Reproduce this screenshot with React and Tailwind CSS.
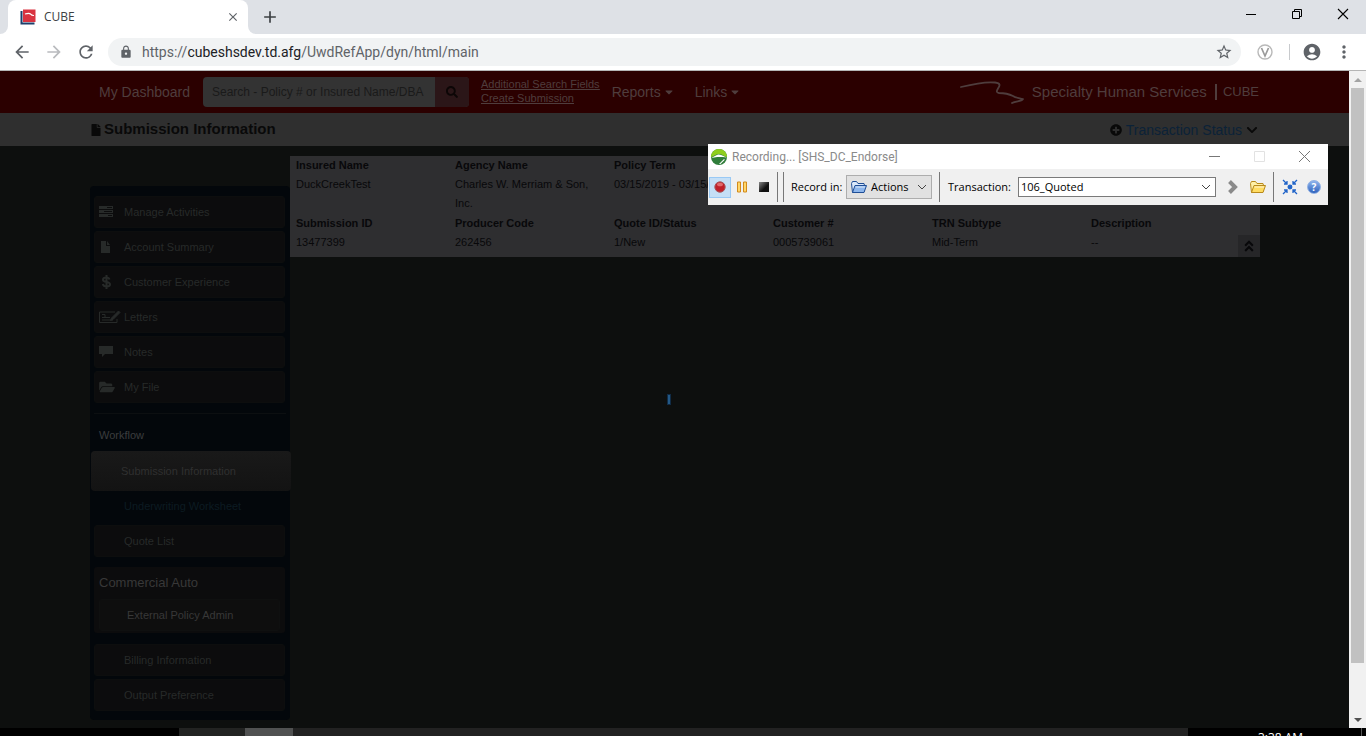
import React from 'react';
import { FaFile, FaFolderOpen, FaSearch, FaPlusCircle, FaChevronDown, FaAngleDoubleUp, FaCaretDown } from 'react-icons/fa';
import { MdArrowBack, MdArrowForward, MdRefresh, MdLock, MdStarBorder, MdAccountCircle, MdMoreVert, MdClose, MdAdd } from 'react-icons/md';

function BrowserTabs() {
  return (
    <div className="flex h-[34px] shrink-0 bg-[#dee1e6]">
      <div className="flex w-2 items-end bg-white"><span className="h-full w-2 rounded-br-lg bg-[#dee1e6]" /></div>
      <div className="flex w-60 items-center rounded-t-lg bg-white pl-3 pr-2">
        <svg className="h-4 w-4" viewBox="0 0 16 16" aria-hidden="true">
          <path d="M1.500 2v12.500h13" fill="none" stroke="#1d3f6b" strokeWidth="2" />
          <rect x="3" y="0.500" width="12.500" height="12.500" fill="#d93340" />
          <path d="M5 5c2-.6 4.500-1 5.500 0 .6.800 1 1.600 3.500 1.500" fill="none" stroke="#fff" strokeWidth="1.200" />
        </svg>
        <span className="ml-2 flex-1 text-xs text-[#3c4043]">CUBE</span>
        <button aria-label="Close tab" className="text-[#5f6368]"><MdClose className="h-[14px] w-[14px]" /></button>
      </div>
      <div className="w-2 bg-white"><span className="block h-full rounded-bl-lg bg-[#dee1e6]" /></div>
      <button aria-label="New tab" className="ml-1 text-[#3c4043]"><MdAdd className="h-5 w-5" /></button>
      <div className="ml-auto flex items-center gap-[34px] pb-[6px] pr-[17px] text-black">
        <button aria-label="Minimize"><svg className="h-3 w-3" viewBox="0 0 12 12"><path d="M1 6.500h10" stroke="currentColor" /></svg></button>
        <button aria-label="Restore"><svg className="h-3 w-3" viewBox="0 0 12 12" fill="none" stroke="currentColor"><path d="M1.500 3.500h7v7h-7zM3.500 3.500v-2h7v7h-2" /></svg></button>
        <button aria-label="Close"><svg className="h-3 w-3" viewBox="0 0 12 12" stroke="currentColor" strokeWidth="1.100"><path d="M1 1l10 10M11 1L1 11" /></svg></button>
      </div>
    </div>
  );
}

function AddressBar() {
  return (
    <div className="flex h-[37px] shrink-0 items-center border-b border-[#b5b5b5] bg-white pl-3 pr-3 text-[#5f6368]">
      <button aria-label="Back"><MdArrowBack className="h-5 w-5" /></button>
      <button aria-label="Forward" className="ml-3 text-[#b9bbbe]"><MdArrowForward className="h-5 w-5" /></button>
      <button aria-label="Reload" className="ml-3"><MdRefresh className="h-5 w-5" /></button>
      <div className="ml-3 flex h-7 flex-1 items-center rounded-full bg-[#f1f3f4] pl-[11px] pr-2">
        <MdLock className="h-[14px] w-[14px]" />
        <div className="ml-[9px] flex-1 font-['Roboto',sans-serif] text-sm" role="textbox" aria-label="Address" tabIndex={0}>
          https://<span className="text-[#202124]">cubeshsdev.td.afg</span>/UwdRefApp/dyn/html/main
        </div>
        <button aria-label="Bookmark"><MdStarBorder className="h-[18px] w-[18px]" /></button>
      </div>
      <button aria-label="Extension" className="ml-4 text-[#9a9a9a]">
        <svg className="h-4 w-4" viewBox="0 0 16 16" fill="none" stroke="currentColor"><circle cx="8" cy="8" r="7" strokeWidth="1.400" opacity=".7" /><path d="M4.500 4L8 12l3.500-8" strokeWidth="1.700" /></svg>
      </button>
      <span className="ml-4 h-4 w-px bg-[#c8cacd]" />
      <button aria-label="Profile" className="ml-3"><MdAccountCircle className="h-5 w-5" /></button>
      <button aria-label="Menu" className="ml-3"><MdMoreVert className="h-5 w-5" /></button>
    </div>
  );
}

function AppHeader() {
  return (
    <header className="h-[42px] bg-[#2b0000] px-[90px] text-sm text-[#4f3d3d]">
      <div className="flex h-full items-center">
        <a href="#dashboard" className="ml-[9px] w-[104px] whitespace-nowrap">My Dashboard</a>
        <form className="flex h-[30px] w-[266px] overflow-hidden rounded-[4px] bg-[#333333]">
          <input aria-label="Search" placeholder="Search - Policy # or Insured Name/DBA" className="h-full min-w-0 flex-1 pl-[9px] text-xs placeholder:text-[#1a1a1a]" />
          <button type="button" aria-label="Run search" className="flex w-[34px] items-center justify-center bg-[#2b1618] text-[#0c0606]"><FaSearch className="h-3 w-3" /></button>
        </form>
        <div className="ml-3 flex flex-col pb-[2px] text-[11px] leading-[14px] underline">
          <a href="#fields">Additional Search Fields</a>
          <a href="#create">Create Submission</a>
        </div>
        <button className="ml-3 flex items-center gap-[2px]">Reports <FaCaretDown className="h-3 w-3" /></button>
        <button className="ml-5 flex items-center gap-[2px]">Links <FaCaretDown className="h-3 w-3" /></button>
        <div className="ml-auto flex items-center">
          <svg className="h-6 w-16" viewBox="0 0 64 24" fill="none" stroke="currentColor" strokeWidth="1.800" strokeLinecap="round" strokeLinejoin="round" aria-hidden="true">
            <path d="M1 7C13 4 26 1.500 35 2.500c6 .8 5 3 3 6-1.500 2.500-2 4 1 4.500 6 0 10 1 14 3 3 2 6 2 10 3-2 3-7 1.500-11 4" />
          </svg>
          <span className="ml-2 text-[15px]">Specialty Human Services</span>
          <span className="ml-[8px] mr-[6px] h-4 w-[2px] bg-[#4f3d3d]" />
          <span className="text-[13px]">CUBE</span>
        </div>
      </div>
    </header>
  );
}

function TitleBar() {
  return (
    <div className="flex h-[33px] items-center justify-between bg-[#2f2f2f] px-[90px]">
      <h1 className="flex items-center gap-[3px] pl-px text-[15px] font-bold text-[#090909]"><FaFile className="h-3 w-[10px]" />Submission Information</h1>
      <button className="flex items-center gap-1 pr-px text-sm text-[#0b2238]"><FaPlusCircle className="h-3 w-3 text-[#090909]" />Transaction Status<FaChevronDown className="h-3 w-3 text-[#090909]" /></button>
    </div>
  );
}

function TasksIcon() {
  return (
    <svg viewBox="0 0 14 12" className="h-3 w-[14px]" fill="currentColor" aria-hidden="true">
      <path d="M0 0h14v3H0zM0 4h14v3H0zM0 8h14v3H0z" /><path d="M8 1h5v1H8zM5 5h8v1H5zM9 9h4v1H9z" fill="#0c0c0d" />
    </svg>
  );
}

function PageIcon() {
  return (
    <svg viewBox="0 0 14 12" className="h-3 w-[14px]" fill="currentColor" aria-hidden="true"><path d="M2 0h5v5h4v7H2zM8 0l3 4H8z" /></svg>
  );
}

function DollarIcon() {
  return (
    <svg viewBox="0 0 14 14" className="h-[14px] w-[14px]" fill="none" stroke="currentColor" strokeWidth="2" aria-hidden="true">
      <path d="M10.500 4.500C10 3 8.800 2.500 7.500 2.500 5.500 2.500 4 3.300 4 4.700 4 8 11 6 11 9.300c0 1.400-1.500 2.200-3.500 2.200S4.300 10.700 3.800 9M7.500 0v14" />
    </svg>
  );
}

function LetterIcon() {
  return (
    <svg viewBox="0 0 22 14" className="h-[14px] w-[22px] shrink-0" fill="none" stroke="currentColor" aria-hidden="true">
      <path d="M16 2H.5v10.500H18V9M3 4.500h3v3M3 7.500h8M3 10h11" /><path d="M11.500 10.500l1-2.500 7-7 1.500 1.500-7 7z" fill="currentColor" />
    </svg>
  );
}

function NoteIcon() {
  return (
    <svg viewBox="0 0 14 12" className="h-3 w-[14px]" fill="currentColor" aria-hidden="true"><path d="M0 0h14v8H6l-3 3V8H0z" /></svg>
  );
}

function FolderOpenIcon() {
  return <FaFolderOpen className="h-[14px] w-4" />;
}

const mainLinks = [
  { label: 'Manage Activities', Icon: TasksIcon },
  { label: 'Account Summary', Icon: PageIcon },
  { label: 'Customer Experience', Icon: DollarIcon },
  { label: 'Letters', Icon: LetterIcon },
  { label: 'Notes', Icon: NoteIcon },
  { label: 'My File', Icon: FolderOpenIcon },
];

function SideLink({ label, Icon }) {
  return (
    <a href="#page" className="flex h-8 items-center rounded-[3px] border border-[#0d0e0e] bg-[#0c0c0d] pl-1 text-[#272a29]">
      <span className="flex w-[25px] shrink-0">{Icon && <Icon />}</span>
      <span>{label}</span>
    </a>
  );
}

function Sidebar() {
  return (
    <nav className="mt-[30px] w-[200px] shrink-0 self-start rounded-[4px] bg-[#03070b] pb-[9px] pt-[10px] text-[11px]">
      <div className="flex flex-col gap-[3px] pl-1 pr-[5px]">
        {mainLinks.map((l) => <SideLink key={l.label} {...l} />)}
      </div>
      <div className="mx-1 mt-[10px] border-t border-[#0c0f11]" />
      <h2 className="pl-[9px] pt-[11px] leading-5 text-[#3b3d3e]">Workflow</h2>
      <a href="#submission" className="ml-px mt-[6px] flex h-10 w-[200px] items-center rounded-[4px] bg-gradient-to-b from-[#191919] to-[#131313] pl-[30px] text-[#303030]">Submission Information</a>
      <a href="#worksheet" className="flex h-[31px] items-center pl-[34px] text-[#0c1b22]">Underwriting Worksheet</a>
      <div className="mt-[3px] flex flex-col pl-1 pr-[5px]">
        <SideLink label="Quote List" />
        <section className="mt-[10px] rounded-[3px] bg-[#0c0c0d] px-[5px] pb-[2px] pt-[6px] text-[#383838]">
          <h2 className="text-[13px] leading-5">Commercial Auto</h2>
          <a href="#external" className="mt-[6px] flex h-8 items-center rounded-[3px] border border-[#0f1010] bg-[#0e0e0e] pl-[27px]">External Policy Admin</a>
        </section>
        <div className="mt-[11px] flex flex-col gap-[3px]">
          <SideLink label="Billing Information" />
          <SideLink label="Output Preference" />
        </div>
      </div>
    </nav>
  );
}

const fields = [
  ['Insured Name', 'DuckCreekTest'],
  ['Agency Name', 'Charles W. Merriam & Son, Inc.'],
  ['Policy Term', '03/15/2019 - 03/15/2020'],
  ['Submission ID', '13477399'],
  ['Producer Code', '262456'],
  ['Quote ID/Status', '1/New'],
  ['Customer #', '0005739061'],
  ['TRN Subtype', 'Mid-Term'],
  ['Description', '--'],
];

function PolicySummary() {
  const cell = ([label, value]) => (
    <div key={label} className="pr-6"><dt className="font-bold">{label}</dt><dd>{value}</dd></div>
  );
  return (
    <section className="flex flex-1 self-start bg-[#2e2e30] pl-[6px] text-[11px] leading-[19px] text-[#08080a]">
      <dl className="flex-1 pb-[5px]">
        <div className="grid grid-cols-6">{fields.slice(0, 3).map(cell)}</div>
        <div className="mt-px grid grid-cols-6">{fields.slice(3).map(cell)}</div>
      </dl>
      <div className="-ml-3 flex w-[22px] items-end">
        <button aria-label="Collapse" className="flex h-[22px] w-[22px] items-center justify-center bg-[#262628]"><FaAngleDoubleUp className="h-[14px] w-[14px]" /></button>
      </div>
    </section>
  );
}

function Scrollbar() {
  return (
    <div className="flex w-[17px] shrink-0 flex-col items-center bg-[#f1f1f1]" aria-hidden="true">
      <span className="flex h-[17px] items-center"><svg className="h-1 w-2" viewBox="0 0 8 4"><path d="M0 4l4-4 4 4z" fill="#a3a3a3" /></svg></span>
      <span className="h-[575px] w-[13px] shrink bg-[#c1c1c1]" />
      <span className="mt-auto flex h-[17px] items-center"><svg className="h-1 w-2" viewBox="0 0 8 4"><path d="M0 0l4 4 4-4z" fill="#505050" /></svg></span>
    </div>
  );
}

function Folder({ blue }) {
  const edge = blue ? '#1f4e96' : '#b98a1c';
  return (
    <svg className="h-[14px] w-4 shrink-0" viewBox="0 0 16 14" aria-hidden="true">
      <path d="M1.500 12.500l-1-9 1-2h4l1.500 2h6l.5 2v6z" fill={blue ? '#dbe9fb' : '#fff0a8'} stroke={edge} />
      <path d="M1.500 12.500l2.500-7h11.500l-2.500 7z" fill={blue ? '#8db6ec' : '#ffdc62'} stroke={edge} strokeLinejoin="round" />
      <path d="M4.500 7h9.500" stroke="#fff" opacity=".7" />
    </svg>
  );
}

function Chevron() {
  return <svg className="pointer-events-none absolute right-1 top-1/2 h-[6px] w-[10px] -translate-y-1/2" viewBox="0 0 10 6" fill="none" stroke="#444" aria-hidden="true"><path d="M1 1l4 4 4-4" /></svg>;
}

function RecorderWindow() {
  return (
    <section aria-label="Recorder" className="absolute left-[708px] top-[144px] w-[620px] bg-[#f0f0f0] text-[11px] text-black">
      <div className="flex h-[25px] items-center bg-white pl-[3px] pr-[18px] text-[#8a8a8a]">
        <svg className="h-4 w-4" viewBox="0 0 16 16" aria-hidden="true">
          <circle cx="8" cy="8" r="8" fill="#2f7d3a" />
          <path d="M0 8a8 8 0 0 1 16 0c-3 0-4-3-8-3S3 8 0 8z" fill="#8fce1e" />
          <path d="M0 8.500C4 8 5 5.500 8 5.500S13 8 16 8.500C13 8 11 8 8 8S3 9 0 8.500z" fill="#fff" />
          <path d="M8 15l5-5 .8.800-4.300 4.200z" fill="#fff" />
        </svg>
        <h2 className="ml-[5px] font-['Roboto',sans-serif] text-xs">Recording... [SHS_DC_Endorse]</h2>
        <div className="ml-auto flex items-center gap-[34px]">
          <button aria-label="Minimize recorder"><svg className="h-[11px] w-[11px]" viewBox="0 0 11 11" stroke="#777"><path d="M0 5.500h11" /></svg></button>
          <button aria-label="Maximize recorder"><svg className="h-[11px] w-[11px]" viewBox="0 0 11 11" stroke="#e2e2e2" fill="none"><path d="M.5.5h10v10H.5z" /></svg></button>
          <button aria-label="Close recorder"><svg className="h-[11px] w-[11px]" viewBox="0 0 11 11" stroke="#777"><path d="M0 0l11 11M11 0L0 11" /></svg></button>
        </div>
      </div>
      <div className="flex h-9 items-center pl-px pr-[7px]">
        <button aria-label="Record" className="flex h-[21px] w-[22px] items-center justify-center border border-[#99c9f5] bg-[#c5dff6]">
          <svg className="h-3 w-3" viewBox="0 0 12 12"><circle cx="6" cy="6" r="5.200" fill="#c0202a" stroke="#a65a5f" /><ellipse cx="6" cy="3.500" rx="3" ry="1.800" fill="#f08a8a" opacity=".7" /></svg>
        </button>
        <button aria-label="Pause" className="ml-[6px]"><svg className="h-3 w-[10px]" viewBox="0 0 10 12" fill="#ffd76a" stroke="#d28a1c"><path d="M.5 1h3v10h-3zM6.500 1h3v10h-3z" /></svg></button>
        <button aria-label="Stop" className="ml-3"><svg className="h-[10px] w-[10px]" viewBox="0 0 10 10"><defs><linearGradient id="stopShade" x1="0" y1="0" x2="1" y2="1"><stop offset="0" stopColor="#888" /><stop offset=".6" stopColor="#111" /></linearGradient></defs><path d="M0 0h10v10H0z" fill="url(#stopShade)" /></svg></button>
        <span className="ml-2 h-[30px] w-px bg-[#777]" /><span className="ml-[5px] h-[30px] w-px bg-[#777]" />
        <label htmlFor="target" className="ml-[7px] w-[55px] whitespace-nowrap">Record in:</label>
        <div className="relative flex h-6 w-[86px] items-center border border-[#adadad] bg-[#e1e1e1] pl-1">
          <Folder blue />
          <select id="target" className="h-full min-w-0 flex-1 appearance-none pl-1"><option>Actions</option></select>
          <Chevron />
        </div>
        <span className="ml-[7px] h-[30px] w-px bg-[#777]" />
        <label htmlFor="transaction" className="ml-2 w-[70px] whitespace-nowrap">Transaction:</label>
        <div className="relative h-5 flex-1 border border-[#7a7a7a] bg-white">
          <select id="transaction" className="h-full w-full appearance-none pl-[2px]"><option>106_Quoted</option></select>
          <Chevron />
        </div>
        <button aria-label="Next" className="ml-3"><svg className="h-[14px] w-[10px]" viewBox="0 0 10 14" fill="none" stroke="#8a8a8a" strokeWidth="4"><path d="M1.500 1.500L7 7l-5.500 5.500" /></svg></button>
        <button aria-label="Open folder" className="ml-3"><Folder /></button>
        <span className="ml-[7px] h-[30px] w-px bg-[#777]" />
        <button aria-label="Compact view" className="ml-2">
          <svg className="h-4 w-4" viewBox="0 0 16 16" fill="none" stroke="#1f63c8" strokeWidth="1.300"><circle cx="8" cy="8" r="1.800" fill="#1f63c8" /><path d="M1 1l4 4M15 1l-4 4M1 15l4-4M15 15l-4-4M5 2v3H2M11 2v3h3M5 14v-3H2M11 14v-3h3" /></svg>
        </button>
        <button aria-label="Help" className="ml-[9px] flex h-[14px] w-[14px] items-center justify-center rounded-full border border-[#8fb0e4] bg-gradient-to-b from-[#8fb4ec] to-[#2e62bd] text-[10px] font-bold leading-3 text-white">?</button>
      </div>
    </section>
  );
}

function Taskbar() {
  return (
    <footer className="flex h-2 shrink-0 overflow-hidden bg-black text-xs text-white">
      <span className="w-[179px]" />
      <span className="w-[66px] bg-[#222322]" />
      <span className="w-12 bg-[#505151]" />
      <span className="flex-1 bg-[#222222]" />
      <span className="flex w-[174px] justify-center border-r border-[#555] pl-3 pt-[3px] leading-[14px]"><time>3:38 AM</time></span>
      <span className="w-1" />
    </footer>
  );
}

export default function App() {
  return (
    <div className="relative flex h-screen flex-col overflow-hidden bg-[#0d0f0e] font-['Open_Sans','Noto_Sans',sans-serif]">
      <BrowserTabs />
      <AddressBar />
      <div className="flex min-h-0 flex-1">
        <div className="min-w-0 flex-1 overflow-hidden font-['Liberation_Sans',sans-serif]">
          <AppHeader />
          <TitleBar />
          <main className="flex pl-[90px] pr-[89px] pt-[10px]">
            <Sidebar />
            <PolicySummary />
          </main>
        </div>
        <Scrollbar />
      </div>
      <Taskbar />
      <div role="status" aria-label="Loading" className="absolute left-[667px] top-[394px] h-[11px] w-1 border border-[#102b45] bg-[#235987]" />
      <RecorderWindow />
    </div>
  );
}
